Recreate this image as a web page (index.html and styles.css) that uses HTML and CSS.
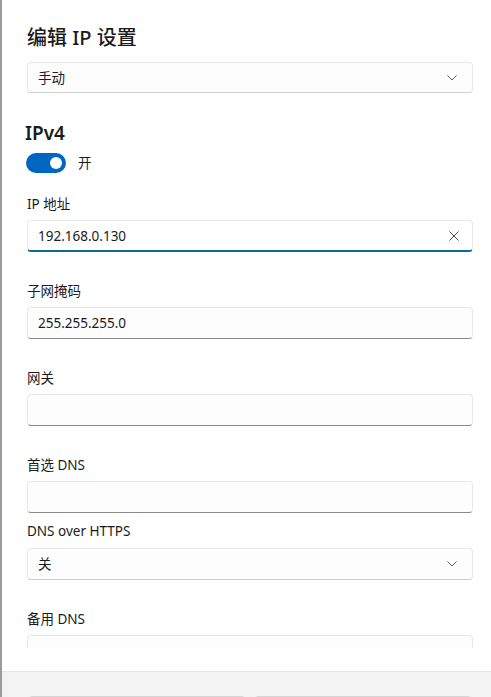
FILE: index.html
```html
<!DOCTYPE html>
<html lang="zh-CN">
<head>
<meta charset="utf-8">
<link rel="stylesheet" href="styles.css">
</head>
<body>
<div class="dialog">
  <div class="scroll">
    <div class="content">
      <h1 class="title">编辑 IP 设置</h1>
      <div class="select mode">
        <span>手动</span>
        <svg class="chev" width="10" height="6" viewBox="0 0 10 6"><path d="M0.5 0.5 L5 5 L9.5 0.5" fill="none" stroke="#5a5a5a" stroke-width="1"/></svg>
      </div>
      <h2 class="section">IPv4</h2>
      <div class="toggle-row">
        <span class="toggle"><span class="knob"></span></span>
        <span class="toggle-label">开</span>
      </div>

      <div class="field first">
        <label class="label">IP 地址</label>
        <div class="input focused">
          <span>192.168.0.130</span>
          <svg class="clear" width="10" height="10" viewBox="0 0 10 10"><path d="M0.5 0.5 L9.5 9.5 M9.5 0.5 L0.5 9.5" fill="none" stroke="#444" stroke-width="1"/></svg>
        </div>
      </div>

      <div class="field">
        <label class="label">子网掩码</label>
        <div class="input"><span>255.255.255.0</span></div>
      </div>

      <div class="field">
        <label class="label">网关</label>
        <div class="input"></div>
      </div>

      <div class="field">
        <label class="label">首选 DNS</label>
        <div class="input"></div>
      </div>

      <div class="field tight">
        <label class="label">DNS over HTTPS</label>
        <div class="select">
          <span>关</span>
          <svg class="chev" width="10" height="6" viewBox="0 0 10 6"><path d="M0.5 0.5 L5 5 L9.5 0.5" fill="none" stroke="#5a5a5a" stroke-width="1"/></svg>
        </div>
      </div>

      <div class="field">
        <label class="label">备用 DNS</label>
        <div class="input"></div>
      </div>
    </div>
  </div>
  <div class="spacer"></div>
  <div class="footer">
    <div class="btn"></div>
    <div class="btn"></div>
  </div>
</div>
</body>
</html>
```

FILE: styles.css
```css
html, body {
  margin: 0;
  padding: 0;
  background: #ffffff;
}
body {
  width: 491px;
  height: 697px;
  overflow: hidden;
  font-family: "Noto Sans", "Noto Sans CJK SC", sans-serif;
  color: #1b1b1b;
  font-size: 13.5px;
}
.dialog {
  box-sizing: border-box;
  height: 697px;
  border-left: 2px solid #9b9b9b;
  display: flex;
  flex-direction: column;
  background: #ffffff;
}
.scroll {
  height: 648px;
  overflow: hidden;
  flex: none;
}
.spacer {
  height: 23px;
  flex: none;
}
.content {
  padding: 24px 18px 0 25px;
  display: flex;
  flex-direction: column;
}
.title {
  margin: 0;
  font-size: 20px;
  font-weight: 500;
  line-height: 28px;
  height: 28px;
}
.select, .input {
  box-sizing: border-box;
  height: 32px;
  border: 1px solid #e8e8e8;
  border-bottom-color: #cfcfcf;
  border-radius: 4px;
  background: #fdfdfd;
  display: flex;
  align-items: center;
  justify-content: space-between;
  padding: 0 15px 0 10px;
  font-size: 13.5px;
  line-height: 20px;
}
.mode {
  margin-top: 10px;
  height: 31px;
}
.input {
  border-bottom-color: #8a8a8a;
}
.input.focused {
  border-bottom: 2px solid #0f6a9b;
  background: #ffffff;
  padding-right: 13px;
}
.section {
  margin: 26px 0 0 -2px;
  font-size: 19px;
  font-weight: 600;
  line-height: 28px;
  height: 28px;
}
.toggle-row {
  margin-top: 6px;
  display: flex;
  align-items: center;
  gap: 12px;
  margin-left: -1px;
}
.toggle {
  width: 40px;
  height: 20px;
  border-radius: 10px;
  background: #0067c0;
  display: flex;
  align-items: center;
  justify-content: flex-end;
  padding-right: 4px;
  box-sizing: border-box;
}
.knob {
  width: 12px;
  height: 12px;
  border-radius: 50%;
  background: #ffffff;
}
.toggle-label {
  font-size: 13.5px;
  line-height: 20px;
}
.field {
  display: flex;
  flex-direction: column;
  gap: 6px;
  margin-top: 29px;
}
.field.first {
  margin-top: 21px;
}
.field.tight {
  margin-top: 8px;
}
.field.tight .select {
  margin-top: 1px;
}
.label {
  font-size: 13.5px;
  line-height: 20px;
  height: 20px;
}
.footer {
  flex: 1;
  background: #f3f3f3;
  border-top: 1px solid #e5e5e5;
  display: flex;
  gap: 8px;
  padding: 24px 19px 0 26px;
}
.btn {
  flex: 1;
  height: 32px;
  border: 1px solid #d6d6d6;
  border-radius: 4px;
  background: #fbfbfb;
  box-sizing: border-box;
}
```
